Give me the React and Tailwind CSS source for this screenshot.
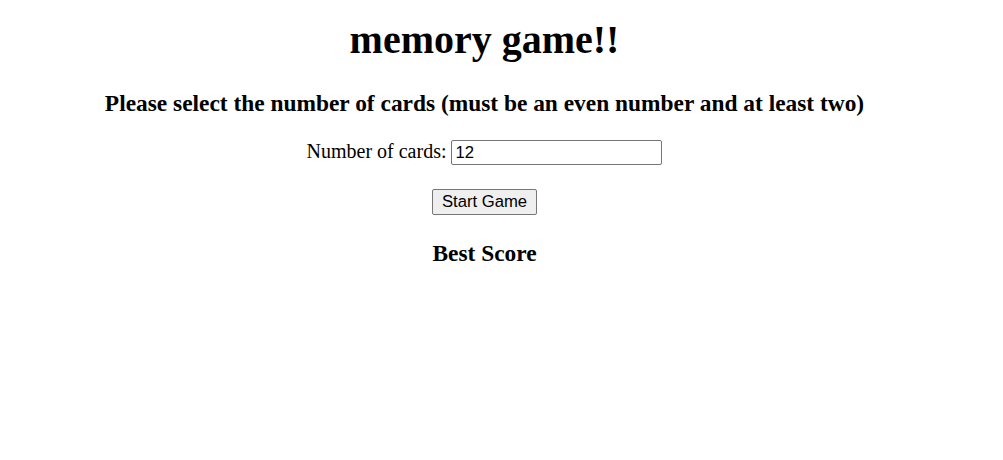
import { useState } from 'react';

const App = () => {
    const [count, setCount] = useState('12');

    return (
        <div className="w-[969px] text-center text-black bg-white" style={{ fontFamily: '"Liberation Serif", serif' }}>
            {/* Title */}
            <h1 className="pt-[17px] text-[40px] font-bold leading-[46px]">memory game!!</h1>

            {/* Instructions */}
            <h3 className="mt-[27px] text-[23.4px] font-bold leading-[27px]">
                Please select the number of cards (must be an even number and at least two)
            </h3>

            {/* Card count */}
            <div className="mt-[22px] text-[20px] leading-[25px]">
                <label htmlFor="cards">Number of cards: </label>
                <input
                    id="cards"
                    type="text"
                    value={count}
                    onChange={(e) => setCount(e.target.value)}
                    className="w-[211px] h-[25px] px-[3px] border border-[#767676] rounded-[2px] text-[16.67px] text-black align-baseline"
                    style={{ fontFamily: '"Liberation Sans", Arial, sans-serif' }}
                />
            </div>

            {/* Start */}
            <div className="mt-[24px] leading-none">
                <button
                    className="w-[105px] h-[26px] bg-[#efefef] border border-[#767676] rounded-[2px] text-[16.67px] text-black"
                    style={{ fontFamily: '"Liberation Sans", Arial, sans-serif' }}
                >
                    Start Game
                </button>
            </div>

            {/* Score */}
            <h3 className="mt-[25px] text-[23.4px] font-bold leading-[27px]">Best Score</h3>
        </div>
    );
};

export default App;
